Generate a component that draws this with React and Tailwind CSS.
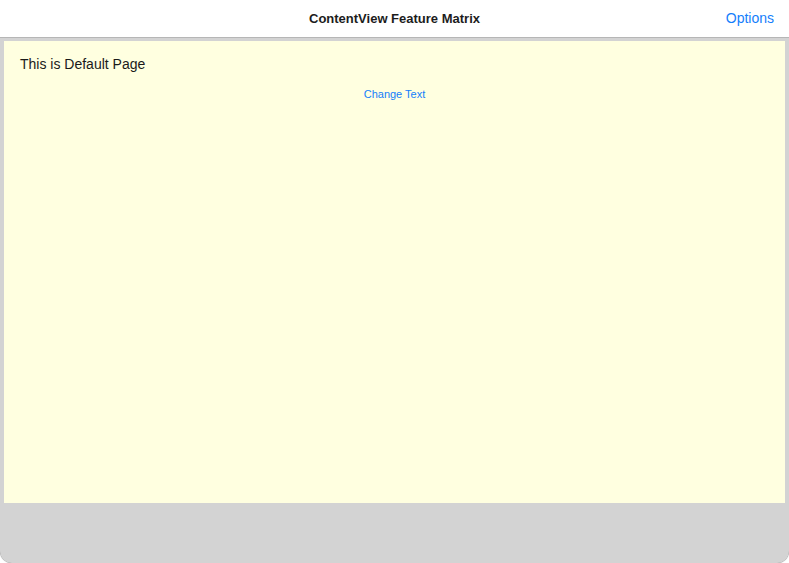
const App = () => {
  return (
    <div className="h-[563px] w-[789px] bg-white flex flex-col" style={{ fontFamily: '"Liberation Sans", Arial, sans-serif' }}>
      {/* Header */}
      <div className="h-[38px] shrink-0 bg-white border-b border-[#b6b6b6] flex items-center relative">
        <h1 className="w-full text-center text-[13px] font-bold text-[#1c1c1c]">ContentView Feature Matrix</h1>
        <button className="absolute right-[15px] top-[8px] text-[14px] text-[#147efb]">Options</button>
      </div>

      {/* Body */}
      <div className="flex-1 bg-[#d3d3d3] rounded-b-[12px] px-[4px] pt-[3px] shadow-[0_0_1px_rgba(0,0,0,0.6)]">
        <div className="h-[462px] bg-[#ffffe0] pt-[15px] px-[16px]">
          <p className="text-[14px] text-[#1a1a1a] leading-[16px]">This is Default Page</p>
          <div className="flex justify-center mt-[15px]">
            <button className="text-[11px] text-[#147efb] leading-[14px]">Change Text</button>
          </div>
        </div>
      </div>
    </div>
  );
};

export default App;
